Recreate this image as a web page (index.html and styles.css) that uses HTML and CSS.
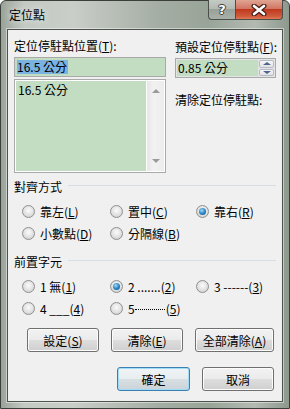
FILE: index.html
```html
<!DOCTYPE html>
<html lang="zh-Hant">
<head>
    <meta charset="UTF-8">
    <title>定位點</title>
    <link rel="stylesheet" href="styles.css">
</head>
<body>
    <div class="window">
        <div class="titlebar">
            <span class="title">定位點</span>
            <div class="capBtns">
                <span class="cap help">?</span>
                <span class="cap close">
                    <svg width="16" height="12" viewBox="0 0 16 12">
                        <path d="M3 2 L13 10 M13 2 L3 10" stroke="#4a2018" stroke-width="5" stroke-linecap="round"/>
                        <path d="M3 2 L13 10 M13 2 L3 10" stroke="#ffffff" stroke-width="2.6" stroke-linecap="round"/>
                    </svg>
                </span>
            </div>
        </div>
        <div class="dialog">
            <div class="topRow">
                <div class="colLeft">
                    <div class="lbl">定位停駐點位置(<u>T</u>):</div>
                    <div class="field"><span class="sel">16.5 公分</span></div>
                    <div class="listbox">
                        <div class="items">
                            <div class="item">16.5 公分</div>
                        </div>
                        <div class="vscroll">
                            <span class="arrUp"></span>
                            <span class="arrDown"></span>
                        </div>
                    </div>
                </div>
                <div class="colRight">
                    <div class="lbl">預設定位停駐點(<u>F</u>):</div>
                    <div class="spin">
                        <span class="spinVal">0.85 公分</span>
                        <div class="spinBtns">
                            <span class="spinBtn"><i class="tri up"></i></span>
                            <span class="spinBtn"><i class="tri down"></i></span>
                        </div>
                    </div>
                    <div class="lbl clearLbl">清除定位停駐點:</div>
                </div>
            </div>

            <div class="group">
                <div class="groupTitle">對齊方式</div>
                <div class="radios">
                    <label class="radio"><span class="dot"></span>靠左(<u>L</u>)</label>
                    <label class="radio"><span class="dot"></span>置中(<u>C</u>)</label>
                    <label class="radio"><span class="dot on"></span>靠右(<u>R</u>)</label>
                    <label class="radio"><span class="dot"></span>小數點(<u>D</u>)</label>
                    <label class="radio"><span class="dot"></span>分隔線(<u>B</u>)</label>
                </div>
            </div>

            <div class="group group2">
                <div class="groupTitle">前置字元</div>
                <div class="radios">
                    <label class="radio"><span class="dot"></span>1 無(<u>1</u>)</label>
                    <label class="radio"><span class="dot on"></span>2 .......(<u>2</u>)</label>
                    <label class="radio"><span class="dot"></span>3 ------(<u>3</u>)</label>
                    <label class="radio"><span class="dot"></span>4 ___(<u>4</u>)</label>
                    <label class="radio"><span class="dot"></span>5 <span class="dotted"></span>(<u>5</u>)</label>
                </div>
            </div>

            <div class="btnRow">
                <button class="btn">設定(<u>S</u>)</button>
                <button class="btn">清除(<u>E</u>)</button>
                <button class="btn wide">全部清除(<u>A</u>)</button>
            </div>
            <div class="btnRow okRow">
                <button class="btn default">確定</button>
                <button class="btn">取消</button>
            </div>
        </div>
    </div>
</body>
</html>
```
FILE: styles.css
```css
body {
    margin: 0;
    font-family: "Noto Sans CJK TC", "Noto Sans", sans-serif;
    font-size: 12px;
    color: #000;
}

.window {
    width: 290px;
    height: 409px;
    box-sizing: border-box;
    border: 1px solid #3a3f3a;
    border-radius: 6px 6px 0 0;
    padding: 0 6px 6px 6px;
    display: flex;
    flex-direction: column;
    background: linear-gradient(to right, #9aa39a 0, #c3c9c3 8%, #c9cec8 25%, #a4ada3 55%, #99a498 72%, #b3bab2 88%, #8e998e 100%);
}

.titlebar {
    height: 28px;
    display: flex;
    justify-content: space-between;
    align-items: flex-start;
}

.title {
    padding: 6px 0 0 2px;
    line-height: 16px;
    text-shadow: 0 0 6px rgba(255,255,255,0.9);
}

.capBtns {
    display: flex;
    margin-top: -1px;
}

.cap {
    height: 20px;
    box-sizing: border-box;
    border: 1px solid #4b4f4b;
    border-top: none;
    display: flex;
    align-items: center;
    justify-content: center;
}

.help {
    width: 27px;
    border-right: none;
    border-radius: 0 0 0 4px;
    background: linear-gradient(#c4cac4 0, #b2b9b2 50%, #99a199 50%, #a9b0a9 100%);
    color: #fff;
    font-family: "DejaVu Sans", sans-serif;
    font-weight: bold;
    font-size: 13px;
    text-shadow: 0 0 1px #333, 1px 0 0 #444, -1px 0 0 #444, 0 1px 0 #444, 0 -1px 0 #444;
}

.close {
    width: 48px;
    border-radius: 0 0 4px 0;
    background: linear-gradient(#e0a593 0, #d27563 45%, #c0391f 50%, #cf5a3c 85%, #e07a56 100%);
}

.dialog {
    flex: 1;
    background: #f0f0f0;
    border: 1px solid #4c524c;
    box-shadow: 0 0 0 1px rgba(255,255,255,0.45);
    padding: 8px 6px 0 6px;
}

.topRow {
    display: flex;
    gap: 9px;
}

.colLeft {
    width: 152px;
}

.colRight {
    width: 101px;
}

.lbl {
    line-height: 16px;
    margin-bottom: 3px;
    white-space: nowrap;
}

.field {
    height: 20px;
    box-sizing: border-box;
    border: 1px solid #a9a9a9;
    background: #c3ddc3;
    display: flex;
    align-items: center;
    padding-left: 2px;
    margin-bottom: 2px;
}

.sel {
    background: #7ab2e2;
    line-height: 14px;
    padding-right: 1px;
}

.listbox {
    height: 94px;
    box-sizing: border-box;
    border: 1px solid #a9a9a9;
    box-shadow: inset 0 0 0 1px #fff;
    display: flex;
    padding: 1px;
}

.items {
    flex: 1;
    background: #c3ddc3;
    padding: 1px 2px;
}

.item {
    line-height: 16px;
}

.vscroll {
    width: 17px;
    background: linear-gradient(to right, #e6e6e6, #f2f2f2 40%, #ececec);
    border-left: 1px solid #fff;
    display: flex;
    flex-direction: column;
    justify-content: space-between;
    align-items: center;
    padding: 8px 0 8px 0;
}

.arrUp, .arrDown {
    width: 0;
    height: 0;
    border-left: 4px solid transparent;
    border-right: 4px solid transparent;
}

.arrUp {
    border-bottom: 4px solid #9a9a9a;
}

.arrDown {
    border-top: 4px solid #9a9a9a;
}

.colRight .lbl:first-child {
    margin-top: 1px;
}

.spin {
    height: 20px;
    box-sizing: border-box;
    border: 1px solid #a9a9a9;
    background: #e4e4e4;
    display: flex;
    padding: 1px;
    margin-top: 1px;
}

.spinVal {
    flex: 1;
    background: #c3ddc3;
    line-height: 16px;
    padding-left: 1px;
}

.spinBtns {
    width: 15px;
    margin-left: 1px;
    display: flex;
    flex-direction: column;
    gap: 1px;
}

.spinBtn {
    flex: 1;
    border: 1px solid #b5bcc8;
    border-radius: 2px;
    background: linear-gradient(#f6f6f6, #e2e2e2);
    display: flex;
    align-items: center;
    justify-content: center;
}

.tri {
    width: 0;
    height: 0;
    border-left: 4px solid transparent;
    border-right: 4px solid transparent;
}

.tri.up {
    border-bottom: 3px solid #4d6390;
}

.tri.down {
    border-top: 3px solid #4d6390;
}

.clearLbl {
    margin-top: 14px;
}

.group {
    margin-top: 6px;
}

.group2 {
    margin-top: 10px;
}

.groupTitle {
    display: flex;
    align-items: center;
    line-height: 16px;
}

.groupTitle::after {
    content: "";
    flex: 1;
    height: 1px;
    margin: 0 0 3px 6px;
    background: #d5dfe5;
}

.radios {
    display: grid;
    grid-template-columns: 88px 86px auto;
    grid-auto-rows: 22px;
    padding-left: 8px;
    margin-top: 5px;
}

.radio {
    display: flex;
    align-items: center;
    white-space: nowrap;
}

.dot {
    width: 13px;
    height: 13px;
    box-sizing: border-box;
    border-radius: 50%;
    border: 1px solid #8e8f8f;
    background: radial-gradient(circle at 50% 40%, #fbfbfb 0, #e6e6e6 45%, #c9c9c9 100%);
    margin-right: 5px;
    display: flex;
    align-items: center;
    justify-content: center;
}

.dot.on::after {
    content: "";
    width: 7px;
    height: 7px;
    border-radius: 50%;
    background: radial-gradient(circle at 40% 35%, #a4dbf8 0, #2e86c6 50%, #0d4d82 100%);
}

.dotted {
    display: inline-block;
    width: 30px;
    height: 0;
    border-top: 1px dotted #000;
    margin: 2px 1px 0 0;
}

.btnRow {
    display: flex;
    justify-content: flex-end;
    gap: 12px;
    margin: 9px 2px 0 0;
}

.okRow {
    margin-top: 15px;
}

.btn {
    width: 72px;
    height: 24px;
    font: inherit;
    color: #000;
    padding: 0;
    border: 1px solid #707070;
    border-radius: 3px;
    box-shadow: inset 0 0 0 1px #fcfcfc;
    background: linear-gradient(#f2f2f2 0, #ebebeb 48%, #dddddd 52%, #cfcfcf 100%);
}

.btn.wide {
    width: 79px;
}

.btn.default {
    width: 73px;
    border-color: #3c7fb1;
    box-shadow: inset 0 0 0 1px #9fdcf5;
    background: linear-gradient(#f0f4f6 0, #e8edf0 48%, #d8dfe3 52%, #cbd3d8 100%);
}
```
